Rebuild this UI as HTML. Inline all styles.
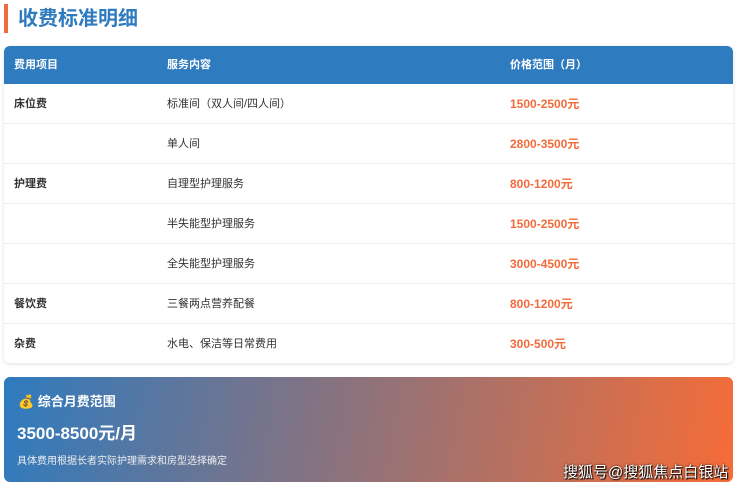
<!DOCTYPE html><html><head><meta charset="utf-8"><style>
body{margin:0;width:740px;height:489px;background:#fff;font-family:"Liberation Sans","Noto Sans CJK SC",sans-serif;position:relative;overflow:hidden}
*{box-sizing:border-box}
.bar{position:absolute;left:4px;top:4px;width:4px;height:29px;background:#f26b3a}
h1{position:absolute;left:18px;top:5px;margin:0;font-size:20px;line-height:28px;color:#2e7bbf;font-weight:bold}
.tbl{position:absolute;left:4px;top:46px;width:729px;border-radius:6px;overflow:hidden;box-shadow:0 1px 4px rgba(0,0,0,.12)}
.row{height:40px;border-bottom:1px solid #ececec;position:relative;font-size:11px;color:#333}
.row:last-child{border-bottom:none;height:39px}
.row span{position:absolute;top:0;line-height:40px}
.c1{left:10px;font-weight:bold}.c2{left:163px}.c3{left:506px;color:#f26b3a;font-weight:bold;font-size:12px}
.hd{height:38px;background:#2e7bbf;color:#fff;border:none}
.hd span{line-height:38px;font-weight:bold;color:#fff!important;font-size:11px!important}
.box{position:absolute;left:4px;top:377px;width:729px;height:105px;border-radius:6px;background:linear-gradient(100deg,#2e7bbf 0%,#7e7386 40%,#b8705f 70%,#f66c37 100%);color:#fff}
.t1{position:absolute;left:14px;top:14px;font-size:13px;font-weight:bold}
.t2{position:absolute;left:13px;top:42px;font-size:17px;font-weight:bold}
.t3{position:absolute;left:13px;top:75px;font-size:10px;color:#eee}
.wm{position:absolute;left:559px;top:84px;font-size:15px;color:#fff;text-shadow:0 0 2px #000,1px 1px 1px #000}
</style></head><body>
<div class="bar"></div><h1>收费标准明细</h1>
<div class="tbl">
<div class="row hd"><span class="c1">费用项目</span><span class="c2">服务内容</span><span class="c3">价格范围（月）</span></div>
<div class="row"><span class="c1">床位费</span><span class="c2">标准间（双人间/四人间）</span><span class="c3">1500-2500元</span></div>
<div class="row"><span class="c2">单人间</span><span class="c3">2800-3500元</span></div>
<div class="row"><span class="c1">护理费</span><span class="c2">自理型护理服务</span><span class="c3">800-1200元</span></div>
<div class="row"><span class="c2">半失能型护理服务</span><span class="c3">1500-2500元</span></div>
<div class="row"><span class="c2">全失能型护理服务</span><span class="c3">3000-4500元</span></div>
<div class="row"><span class="c1">餐饮费</span><span class="c2">三餐两点营养配餐</span><span class="c3">800-1200元</span></div>
<div class="row"><span class="c1">杂费</span><span class="c2">水电、保洁等日常费用</span><span class="c3">300-500元</span></div>
</div>
<div class="box"><div class="t1"><span style="color:#e8a317">💰</span> 综合月费范围</div><div class="t2">3500-8500元/月</div><div class="t3">具体费用根据长者实际护理需求和房型选择确定</div><div class="wm">搜狐号@搜狐焦点白银站</div></div>
</body></html>
